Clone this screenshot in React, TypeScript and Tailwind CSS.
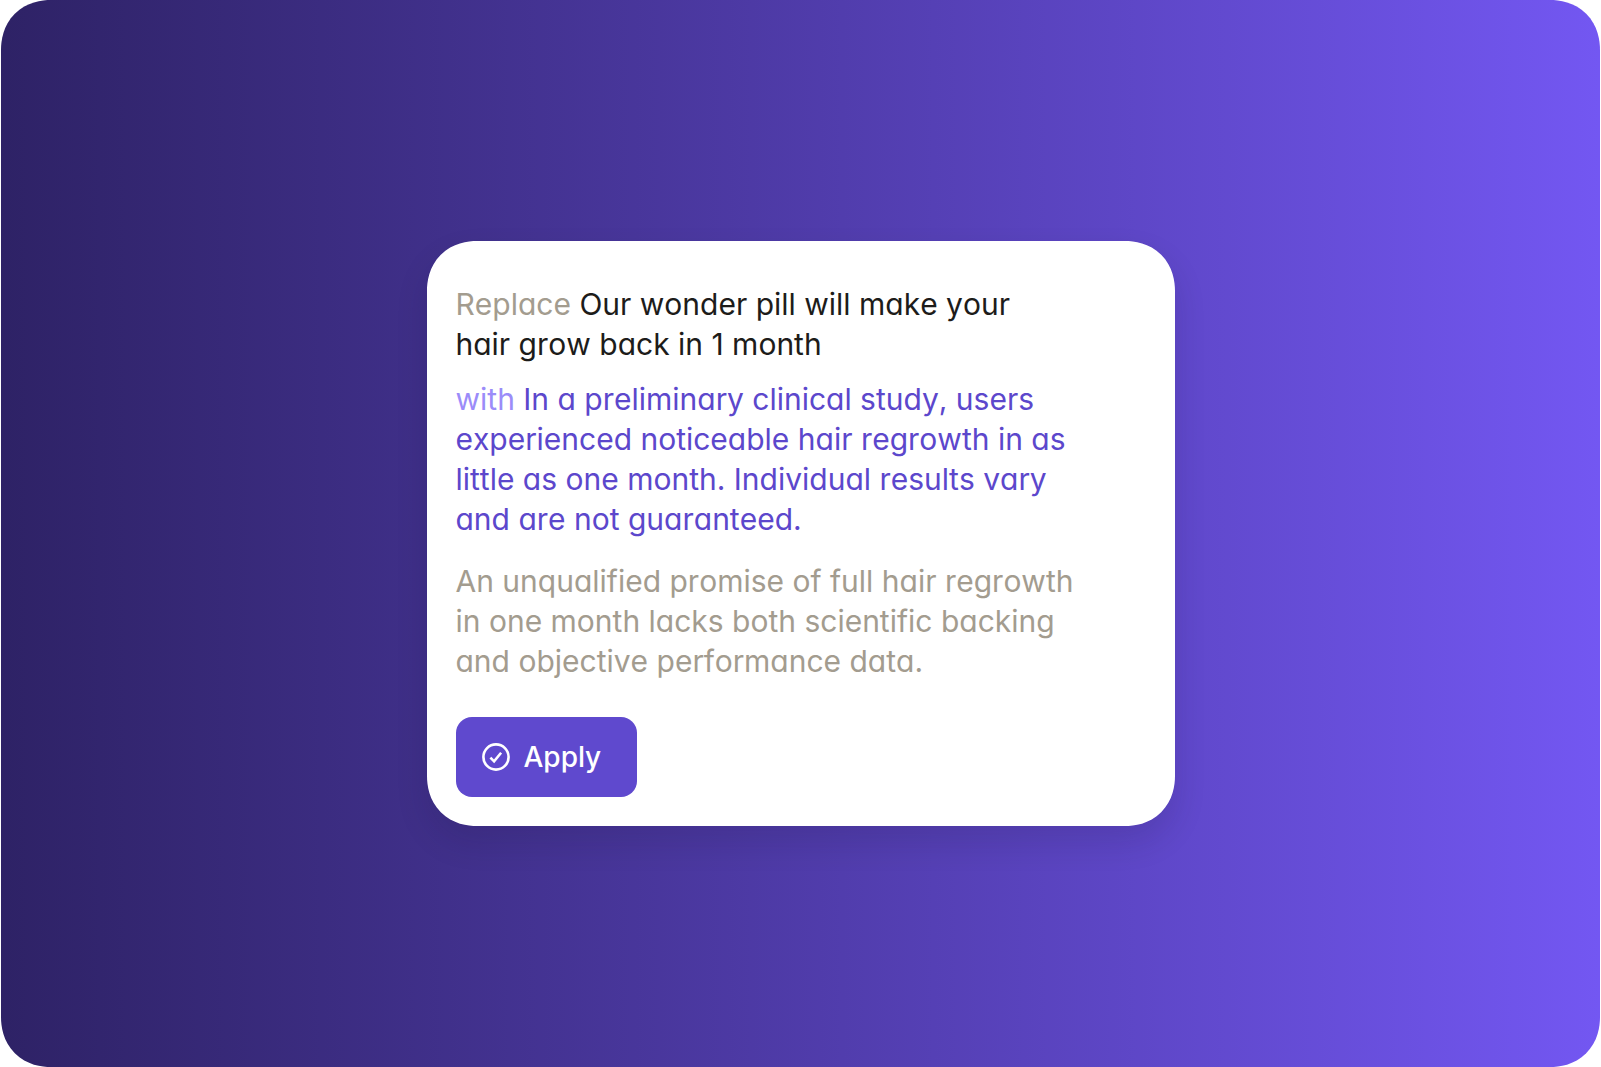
import { ReactNode } from "react";

const Paragraph = ({
  children,
  className,
}: {
  children: ReactNode;
  className: string;
}) => <p className={`text-[30px] leading-10 ${className}`}>{children}</p>;

const CheckCircle = () => (
  <svg
    className="size-7"
    viewBox="0 0 28 28"
    fill="none"
    stroke="currentColor"
    strokeWidth="2.6"
    aria-hidden="true"
  >
    <circle cx="14" cy="14" r="12.6" />
    <path d="M8.4 14.6l3.7 3.7 7-8.6" />
  </svg>
);

export default function App() {
  return (
    <div className="min-h-screen bg-white px-px font-['Inter',sans-serif] [font-feature-settings:'cv11'] [font-kerning:none]">
      <main className="flex min-h-screen items-center justify-center rounded-[50px] [corner-shape:superellipse(1.1)] bg-linear-to-r from-[#2e2266] to-[#7357f2]">
        <section className="w-full max-w-[748px] rounded-[50px] [corner-shape:superellipse(1.1)] bg-white px-[29px] pt-[43px] pb-[29px] shadow-[0_16px_32px_rgba(20,15,50,0.14)]">
          <div className="max-w-[640px]">
            <Paragraph className="text-[#1d1c1a]">
              <span className="text-[#a39c8f]">Replace</span> Our wonder pill will make your
              <br />
              hair grow back in 1 month
            </Paragraph>
            <Paragraph className="mt-[15px] text-[#5c47cc]">
              <span className="text-[#9b8cf9]">with</span> In a preliminary clinical study, users
              experienced noticeable hair regrowth in as little as one month. Individual results
              vary and are not guaranteed.
            </Paragraph>
            <Paragraph className="mt-[22px] text-[#a39c8f]">
              An unqualified promise of full hair regrowth in one month lacks both scientific
              backing and objective performance data.
            </Paragraph>
          </div>
          <button className="mt-9 flex h-20 items-center gap-[14px] rounded-2xl bg-[#5f49ce] pr-9 pl-[26px] text-[28px] font-medium text-white">
            <CheckCircle />
            Apply
          </button>
        </section>
      </main>
    </div>
  );
}
